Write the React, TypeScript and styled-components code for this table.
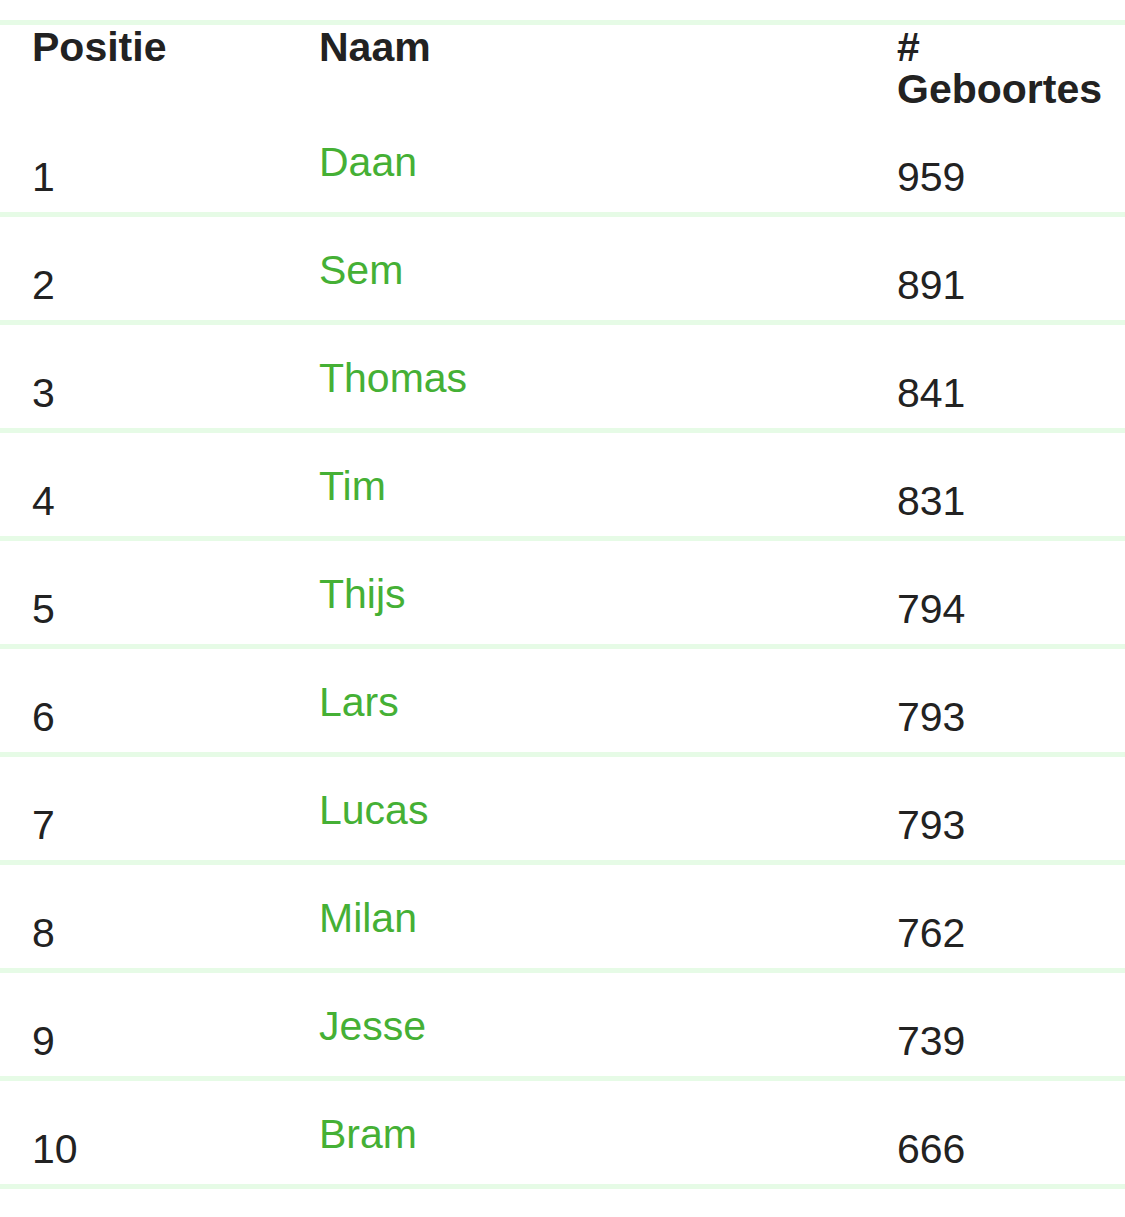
import styled, { createGlobalStyle } from 'styled-components';

const GlobalStyle = createGlobalStyle`
	body {
		margin: 0;
		background: #ffffff;
		font-family: 'Liberation Sans', Arial, Helvetica, sans-serif;
		color: #222222;
	}
`;

const Table = styled.div`
	margin-top: 20px;
	width: 100%;
	overflow: hidden;
`;

const HeaderRow = styled.div`
	display: grid;
	grid-template-columns: 287px 578px 1fr;
	align-items: start;
	border-top: 5px solid #e6fbe6;
	height: 89px;
	box-sizing: border-box;
	padding-top: 1px;
`;

const HeaderCell = styled.div`
	padding-left: 32px;
	font-size: 41px;
	line-height: 42px;
	font-weight: 700;
	color: #222222;
`;

const Row = styled.div`
	display: grid;
	grid-template-columns: 287px 578px 1fr;
	align-items: end;
	height: 108px;
	box-sizing: border-box;
	border-bottom: 5px solid #e6fbe6;
`;

const Cell = styled.div<{ $raised?: boolean }>`
	padding-left: 32px;
	padding-bottom: ${(props) => (props.$raised ? '29px' : '14px')};
	font-size: 41px;
	line-height: 41px;
	color: #222222;
`;

const NameLink = styled.a`
	color: #45b035;
	text-decoration: none;
	cursor: pointer;
`;

const names = [
	{ pos: 1, name: 'Daan', count: 959 },
	{ pos: 2, name: 'Sem', count: 891 },
	{ pos: 3, name: 'Thomas', count: 841 },
	{ pos: 4, name: 'Tim', count: 831 },
	{ pos: 5, name: 'Thijs', count: 794 },
	{ pos: 6, name: 'Lars', count: 793 },
	{ pos: 7, name: 'Lucas', count: 793 },
	{ pos: 8, name: 'Milan', count: 762 },
	{ pos: 9, name: 'Jesse', count: 739 },
	{ pos: 10, name: 'Bram', count: 666 },
];

const App = () => {
	return (
		<>
			<GlobalStyle />
			<Table>
				<HeaderRow>
					<HeaderCell>Positie</HeaderCell>
					<HeaderCell>Naam</HeaderCell>
					<HeaderCell>
						#
						<br />
						Geboortes
					</HeaderCell>
				</HeaderRow>
				{names.map((e) => {
					return (
						<Row key={e.pos}>
							<Cell>{e.pos}</Cell>
							<Cell $raised>
								<NameLink>{e.name}</NameLink>
							</Cell>
							<Cell>{e.count}</Cell>
						</Row>
					);
				})}
			</Table>
		</>
	);
};

export default App;
